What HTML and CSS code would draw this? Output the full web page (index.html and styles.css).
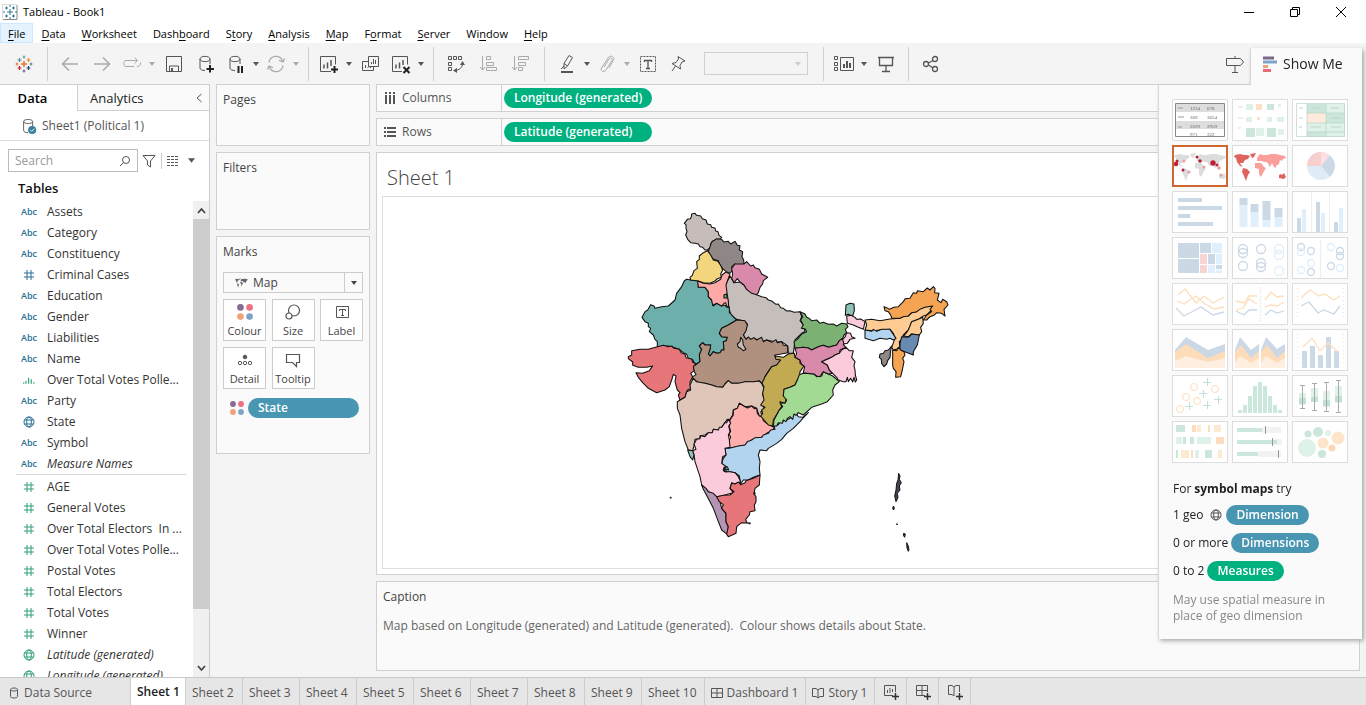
FILE: index.html
```html
<!DOCTYPE html>
<html lang="en">
<head>
<meta charset="utf-8">
<title>Tableau - Book1</title>
<link rel="stylesheet" href="styles.css">
</head>
<body>
<svg class="sprite" aria-hidden="true">
  <symbol id="caret" viewBox="0 0 6 4"><path d="M0 0h6L3 4z" fill="currentColor"/></symbol>
  <symbol id="cyl" viewBox="0 0 20 20"><path d="M4 5v10c0 1.500 2.500 2.500 5 2.500M14 5v5M4 5c0-3 10-3 10 0s-10 3-10 0z" fill="none" stroke="currentColor"/></symbol>
  <symbol id="hash" viewBox="0 0 12 12"><path d="M4 1v10M8 1v10M1 4h10M1 8h10" fill="none" stroke="currentColor"/></symbol>
  <symbol id="globe" viewBox="0 0 12 12"><g fill="none" stroke="currentColor"><circle cx="6" cy="6" r="5"/><ellipse cx="6" cy="6" rx="2.300" ry="5"/><path d="M1.500 4h9M1.500 8h9"/></g></symbol>
  <symbol id="bars" viewBox="0 0 16 12"><path d="M1 9v2M4 7v4M7.500 3v8M11 5v6M14.500 9v2" stroke="currentColor" stroke-width="1.500"/></symbol>
  <symbol id="dots" viewBox="0 0 14 14"><circle cx="3" cy="3" r="2.900" fill="#866a94"/><circle cx="11" cy="3" r="2.900" fill="#ee6f82"/><circle cx="3" cy="11" r="2.900" fill="#f0a177"/><circle cx="11" cy="11" r="2.900" fill="#7fa2ca"/></symbol>
  <symbol id="west" viewBox="0 0 54 40"><path d="M2 9l5-1 4 1 3 0 3 1-2 3-3 1-2 3-3 0 1 2 2 2-3-1-3-4-1-4-2-1zM17 8l6-1-2 4-2 1zM10 22l4 1 3 3-2 3-2 6-2-5-2-4z"/></symbol>
  <symbol id="east" viewBox="0 0 54 40"><path d="M24 15l0-3 3-4 3 1 4 0 4-1 5 0 4 1 5 1 1 2-3 1-1 2-2-1-1 4-3 2 0 2-2-1-2-4-2 4-3-5-3 0-2-1zM22 17l6 0 3 4 2 1-3 5-2 4-2-3 0-5-4-1z"/></symbol>
  <symbol id="oz" viewBox="0 0 54 40"><path d="M46 29l2-1 1 1 2-2 2 4-2 2-5-1z"/></symbol>
  <symbol id="logo" viewBox="0 0 18 18"><g fill="none" stroke-width="1.200"><path d="M9 6v6M6 9h6" stroke="#e8762c" stroke-width="1.600"/><path d="M4.500 3v4M2.500 5h4" stroke="#59879b"/><path d="M13.500 3v4M11.500 5h4" stroke="#eb9129"/><path d="M4.500 11v4M2.500 13h4" stroke="#c72035"/><path d="M13.500 11v4M11.500 13h4" stroke="#1f457e"/><path d="M9 .5v3M7.500 2h3" stroke="#7199a6"/><path d="M9 14.500v3M7.500 16h3" stroke="#5b6591"/><path d="M2 7.500v3M.5 9h3" stroke="#e8762c"/><path d="M16 7.500v3M14.500 9h3" stroke="#5b879b"/></g></symbol>
</svg>

<div class="app">
  <header class="titlebar">
    <svg class="app-icon" width="16" height="16" viewBox="0 0 16 16"><path d="M.5.5h14M.5.5v14" stroke="#ddd"/><path d="M15 1v14.500H1" fill="none" stroke="#888"/><path d="M8 5v6M5 8h6M4.500 2.500v3M3 4h3M11.500 2.500v3M10 4h3M4.500 10.500v3M3 12h3M11.500 10.500v3M10 12h3M8 1v2M8 13v2M1 8h2M13 8h2" stroke="#2c7596" fill="none"/></svg>
    <span class="title">Tableau - Book1</span>
    <div class="window-buttons">
      <button aria-label="Minimise"><svg width="12" height="12"><path d="M1 6.500h10" stroke="#000"/></svg></button>
      <button aria-label="Restore"><svg width="12" height="12" fill="none" stroke="#000"><path d="M1.500 3.500h7v7h-7zM3.500 3.500v-2h7v7h-2"/></svg></button>
      <button aria-label="Close"><svg width="12" height="12"><path d="M1 1l10 10M11 1L1 11" stroke="#000"/></svg></button>
    </div>
  </header>

  <nav class="menubar">
    <button class="active"><u>F</u>ile</button><button><u>D</u>ata</button><button><u>W</u>orksheet</button><button>Dash<u>b</u>oard</button><button>S<u>t</u>ory</button><button><u>A</u>nalysis</button><button><u>M</u>ap</button><button>F<u>o</u>rmat</button><button><u>S</u>erver</button><button>Wi<u>n</u>dow</button><button><u>H</u>elp</button>
  </nav>

  <div class="toolbar">
    <div class="group start"><button class="tool" aria-label="Start page"><svg width="18" height="18"><use href="#logo"/></svg></button></div>
    <div class="group">
      <button class="tool off" aria-label="Undo"><svg width="20" height="20"><path d="M18 10H3M9 3.500L2.500 10 9 16.500" stroke-width="1.600"/></svg></button>
      <button class="tool off" aria-label="Redo"><svg width="20" height="20"><path d="M2 10h15M11 3.500l6.500 6.500-6.500 6.500" stroke-width="1.600"/></svg></button>
      <button class="tool combo off" aria-label="Replay"><svg width="20" height="20"><path d="M12 12.500H4c-3 0-3-6 0-6h11M12.500 3.500l3 3-3 3M15 12.500c2 0 4-1 3.500-4"/></svg></button><button class="more off" aria-label="Replay options"><svg><use href="#caret"/></svg></button>
      <button class="tool" aria-label="Save"><svg width="20" height="20"><path d="M2.500 2.500h15v15h-15zM5.500 17v-5h9v5"/><path d="M8 14v3" stroke-width="2"/></svg></button>
      <button class="tool" aria-label="New data source"><svg width="20" height="20"><path d="M4 5v9c0 1.500 2 2.500 5 2.500M14 5v5M4 5c0-3.500 10-3.500 10 0s-10 3.500-10 0z"/><path d="M14 11v7.500M10.500 15h7.500" stroke="#222" stroke-width="2"/></svg></button>
      <button class="tool combo" aria-label="Pause auto updates"><svg width="20" height="20"><path d="M4 5v9c0 1.500 2 2.500 5 2.500M14 5v5M4 5c0-3.500 10-3.500 10 0s-10 3.500-10 0z"/><path d="M12.500 12v7M16 12v7" stroke="#222" stroke-width="2"/></svg></button><button class="more" aria-label="Update options"><svg><use href="#caret"/></svg></button>
      <button class="tool combo off" aria-label="Refresh"><svg width="20" height="20"><path d="M3 8.500A7 7 0 0 1 16.500 7M17 11.500A7 7 0 0 1 3.500 13M18.500 4.500L17 8l-4-1.500M1.500 15.500L3 12l4 1.500" stroke-width="1.300"/></svg></button><button class="more off" aria-label="Refresh options"><svg><use href="#caret"/></svg></button>
    </div>
    <div class="group">
      <button class="tool combo" aria-label="New worksheet"><svg width="20" height="20"><path d="M12 17.500H1.500v-15h15v8"/><path d="M5 14.500v-4M8.500 14.500v-6M12 12V6" stroke-width="1.500"/><path d="M15.500 12v7M12 15.500h7" stroke="#222" stroke-width="2"/></svg></button><button class="more" aria-label="New options"><svg><use href="#caret"/></svg></button>
      <button class="tool" aria-label="Duplicate"><svg width="20" height="20"><path d="M7.500 2.500h10v10h-10zM7 7.500H1.500v9h11v-4M4.500 14v-3M7 14v-1M9.500 14v-1M10.500 10V8M12.500 10V5M14.500 10V6"/></svg></button>
      <button class="tool combo" aria-label="Clear sheet"><svg width="20" height="20"><path d="M11 17.500H1.500v-15h15v8"/><path d="M5 14.500v-4M8.500 14.500v-6M12 11V6" stroke-width="1.500"/><path d="M12.500 13l6 6M18.500 13l-6 6" stroke="#222" stroke-width="2"/></svg></button><button class="more" aria-label="Clear options"><svg><use href="#caret"/></svg></button>
    </div>
    <div class="group">
      <button class="tool" aria-label="Swap rows and columns"><svg width="20" height="20"><path d="M2.500 2.500h3v3h-3zM7.500 2.500h3v3h-3zM12.500 2.500h3v3h-3zM2.500 8.500h3v3h-3zM2.500 13.500h3v3h-3zM16.500 9c0 5-3 7-8 7.500"/><path d="M16.500 7l2.500 4h-5zM7 16.500l4-2.500v5z" fill="currentColor" stroke="none"/></svg></button>
      <button class="tool off" aria-label="Sort ascending"><svg width="20" height="20"><path d="M4.500 2v14M2 13l2.500 3L7 13M8.500 2.500h4v3h-4zM8.500 8.500h7v3h-7zM8.500 13.500h10v3h-10z"/></svg></button>
      <button class="tool off" aria-label="Sort descending"><svg width="20" height="20"><path d="M4.500 2v14M2 13l2.500 3L7 13M8.500 2.500h10v3h-10zM8.500 8.500h7v3h-7zM8.500 13.500h4v3h-4z"/></svg></button>
    </div>
    <div class="group edit">
      <button class="tool combo" aria-label="Highlight"><svg width="20" height="20"><path d="M7 9.500L12 1.500l3.500 2-5 8.500-3.500 3V9.500l3.500 2.500M7 12l-3 3"/><path d="M4 18h12" stroke-width="2"/></svg></button><button class="more" aria-label="Highlight options"><svg><use href="#caret"/></svg></button>
      <button class="tool combo off" aria-label="Group members"><svg width="20" height="20"><path d="M7 13l5-8c1.500-2 4-.5 3 1.500l-6 9.500c-2 3-6 1-4.500-2L11 4c2-3.500 7-1.500 5.500 2L12 14"/></svg></button><button class="more off" aria-label="Group options"><svg><use href="#caret"/></svg></button>
      <button class="tool label-tool" aria-label="Show mark labels"><svg width="20" height="20"><path d="M2.500 2.500h15v15h-15z" stroke-dasharray="2 1"/><path d="M6.500 8V6.500h7V8M10 6.500v8M8 14.500h4" stroke-width="1.300"/></svg></button>
      <button class="tool" aria-label="Fix axes"><svg width="20" height="20"><path d="M9 2.500l7 4.500-3 1-2 3.500.5 3.500L3 9.500l4-1 2.500-3.500zM6.500 12L3 17"/></svg></button>
    </div>
    <div class="fit"><select aria-label="Fit" disabled><option></option></select><svg><use href="#caret"/></svg></div>
    <div class="group">
      <button class="tool combo" aria-label="Show cards"><svg width="20" height="20"><path d="M.5 2.500h3v3h-3zM.5 8.500h3v3h-3zM.5 13.500h3v3h-3zM6.500 3.500h13v13h-13z"/><path d="M10 14v-4M13 14V7M16 14V9" stroke-width="2"/></svg></button><button class="more" aria-label="Card options"><svg><use href="#caret"/></svg></button>
      <button class="tool" aria-label="Presentation mode"><svg width="20" height="20"><path d="M2 3.500h16M3.500 3.500v8h13v-8M10 12v5M6 17.500h8" stroke-width="1.300"/></svg></button>
    </div>
    <div class="group">
      <button class="tool" aria-label="Share"><svg width="20" height="20" stroke-width="1.300"><circle cx="5" cy="10" r="2.500"/><circle cx="14" cy="5" r="2.500"/><circle cx="14" cy="15" r="2.500"/><path d="M7.500 9L12 6.500M7.500 11L12 14"/></svg></button>
    </div>
    <button class="tool guide" aria-label="Guide"><svg width="20" height="20"><path d="M1.500 4.500h14l3 3.500-3 3.500h-14zM10 2v2M10 12v6M7 18.500h6"/></svg></button>
  </div>

  <main class="work">
    <aside class="data-pane">
      <div class="pane-tabs"><button class="tab on">Data</button><button class="tab">Analytics</button><button class="collapse" aria-label="Collapse"><svg width="8" height="10"><path d="M6.500 1L2 5l4.500 4" fill="none" stroke="#555"/></svg></button></div>
      <a class="source" href="#"><svg width="18" height="18" viewBox="0 0 20 20"><use href="#cyl"/><circle cx="13.500" cy="14.500" r="4.500" fill="#3a7f9c"/><path d="M11.500 14.500l1.500 1.500 3-3" stroke="#fff" fill="none"/></svg>Sheet1 (Political 1)</a>
      <div class="search-row">
        <label class="search"><input type="text" placeholder="Search" aria-label="Search"><svg width="12" height="12" fill="none" stroke="#555"><circle cx="7" cy="5" r="3.500"/><path d="M4.500 7.500L1 11"/></svg></label>
        <button aria-label="Filter"><svg width="14" height="14" fill="none" stroke="#555"><path d="M1 1.500h12L8.500 7v6l-3-2V7z"/></svg></button>
        <span class="vline"></span>
        <button class="view-as" aria-label="View as"><svg class="grid-icon" width="12" height="10"><path d="M0 .5h12M0 3.500h12M0 6.500h12M0 9.500h12" stroke="#555" stroke-dasharray="3 1" stroke-width="1"/></svg><svg class="big-caret"><use href="#caret"/></svg></button>
      </div>
      <h2>Tables</h2>
      <div class="list-wrap">
        <ul class="fields">
          <li><b>Abc</b><span>Assets</span></li>
          <li><b>Abc</b><span>Category</span></li>
          <li><b>Abc</b><span>Constituency</span></li>
          <li><svg><use href="#hash"/></svg><span>Criminal Cases</span></li>
          <li><b>Abc</b><span>Education</span></li>
          <li><b>Abc</b><span>Gender</span></li>
          <li><b>Abc</b><span>Liabilities</span></li>
          <li><b>Abc</b><span>Name</span></li>
          <li class="green"><svg><use href="#bars"/></svg><span>Over Total Votes Polle...</span></li>
          <li><b>Abc</b><span>Party</span></li>
          <li><svg><use href="#globe"/></svg><span>State</span></li>
          <li><b>Abc</b><span>Symbol</span></li>
          <li class="it"><b>Abc</b><span>Measure Names</span></li>
          <li class="green first"><svg><use href="#hash"/></svg><span>AGE</span></li>
          <li class="green"><svg><use href="#hash"/></svg><span>General Votes</span></li>
          <li class="green"><svg><use href="#hash"/></svg><span>Over Total Electors&nbsp; In ...</span></li>
          <li class="green"><svg><use href="#hash"/></svg><span>Over Total Votes Polle...</span></li>
          <li class="green"><svg><use href="#hash"/></svg><span>Postal Votes</span></li>
          <li class="green"><svg><use href="#hash"/></svg><span>Total Electors</span></li>
          <li class="green"><svg><use href="#hash"/></svg><span>Total Votes</span></li>
          <li class="green"><svg><use href="#hash"/></svg><span>Winner</span></li>
          <li class="green it"><svg><use href="#globe"/></svg><span>Latitude (generated)</span></li>
          <li class="green it"><svg><use href="#globe"/></svg><span>Longitude (generated)</span></li>
        </ul>
        <div class="scrollbar"><button aria-label="Scroll up"><svg width="9" height="7"><path d="M1 6l3.500-4L8 6" fill="none" stroke="#444" stroke-width="1.800"/></svg></button><span class="thumb-bar"></span><button class="down" aria-label="Scroll down"><svg width="9" height="7"><path d="M1 1l3.500 4L8 1" fill="none" stroke="#444" stroke-width="1.800"/></svg></button></div>
      </div>
    </aside>

    <section class="cards">
      <div class="card pages">Pages</div>
      <div class="card filters">Filters</div>
      <div class="card marks">
        <div>Marks</div>
        <div class="mark-type"><svg class="world" width="13" height="10" viewBox="0 6 54 30" preserveAspectRatio="none" fill="#666"><use href="#west" width="54" height="40"/><use href="#east" width="54" height="40"/></svg><select aria-label="Mark type"><option>Map</option></select><span class="drop"><svg><use href="#caret"/></svg></span></div>
        <div class="mark-grid">
          <button><svg width="16" height="16"><use href="#dots"/></svg>Colour</button>
          <button><svg width="16" height="16" fill="none" stroke="#555" stroke-width="1.200"><circle cx="9" cy="6.500" r="5.500"/><circle cx="4" cy="12" r="3" fill="#fafafa"/></svg>Size</button>
          <button><svg width="16" height="16" fill="none" stroke="#555"><path d="M2.500 2.500h12v11h-12zM5.500 7V5.500h6V7M8.500 5.500v6M7 11.500h3"/></svg>Label</button>
          <button><svg width="16" height="16" fill="none" stroke="#555"><circle cx="8" cy="5" r="1.800" fill="#555"/><circle cx="3" cy="11" r="1.700"/><circle cx="8" cy="11" r="1.700"/><circle cx="13" cy="11" r="1.700"/></svg>Detail</button>
          <button><svg width="16" height="16" fill="none" stroke="#555" stroke-width="1.200"><path d="M1.500 2.500h13v8h-3v4l-4-4h-6z"/></svg>Tooltip</button>
        </div>
        <div class="mark-pill"><svg width="14" height="14"><use href="#dots"/></svg><button class="pill blue">State</button></div>
      </div>
    </section>

    <section class="sheet">
      <div class="shelf"><div class="shelf-name"><svg width="12" height="12"><path d="M2 0v2M6 0v2M10 0v2M2 3v9M6 3v9M10 3v9" stroke="#555" stroke-width="2"/></svg>Columns</div><button class="pill green-bg">Longitude (generated)</button></div>
      <div class="shelf"><div class="shelf-name"><svg width="12" height="12"><path d="M0 2h2M0 6h2M0 10h2M3 2h9M3 6h9M3 10h9" stroke="#555" stroke-width="2"/></svg>Rows</div><button class="pill green-bg">Latitude (generated)</button></div>
      <div class="view">
        <h1>Sheet 1</h1>
        <div class="canvas">
          <svg class="india" viewBox="0 0 1020 1080" role="img" aria-label="Map of India by state">
            <g stroke="#111" stroke-width="3.200" stroke-linejoin="round">
              <path fill="#c6bebb" d="M330 228L342 248 360 246 372 255 380 268 410 284 425 290 438 293 445 300 455 303 468 313 475 312 482 323 490 325 500 333 510 332 522 337 540 335 545 350 540 362 550 375 555 395 545 400 525 420 522 445 520 460 505 460 503 438 485 425 468 426 440 420 425 425 410 418 380 420 370 405 378 390 382 372 370 362 350 358 335 350 330 335 326 320 325 305 318 285 316 255Z"/>
              <path fill="#c6bcba" d="M225 40L230 46 242 48 247 56 258 60 262 72 272 74 275 82 285 84 287 93 294 95 297 106 305 112 298 118 280 122 272 132 272 142 262 150 255 150 248 142 240 140 235 132 225 130 212 128 203 118 197 105 201 95 198 85 198 74 193 70 202 58 211 56 214 50 215 42Z"/>
              <path fill="#6dafaa" d="M200 238L212 240 235 243 235 262 255 262 265 275 265 290 275 300 280 318 290 310 305 318 315 315 320 322 328 322 328 337 335 345 350 360 325 375 305 385 298 400 305 410 322 412 319 422 310 425 312 450 305 450 300 458 290 460 280 455 270 468 265 462 270 448 272 435 255 435 248 428 238 438 245 448 238 465 240 485 230 492 222 488 219 480 205 475 200 463 190 458 178 448 155 440 145 438 112 440 112 425 105 418 100 405 88 395 92 385 85 380 85 370 75 365 66 352 75 335 83 330 92 314 102 318 105 325 125 320 145 318 165 300 170 280 185 260 193 242Z"/>
              <path fill="#8f8686" d="M290 116L305 118 312 126 325 124 332 132 345 124 352 136 360 137 358 150 368 155 366 170 371 180 372 192 362 198 345 192 335 200 338 212 328 220 318 214 308 206 300 196 295 182 280 178 270 165 265 155 270 140 275 126Z"/>
              <path fill="#f3d57d" d="M262 152L272 165 280 180 294 184 302 196 308 210 302 222 304 232 292 236 285 243 270 250 250 248 235 243 212 240 210 232 217 226 222 212 232 205 230 185 238 178 238 168 250 158Z"/>
              <path fill="#fea9a8" d="M318 216L330 222 325 235 318 255 322 285 325 305 326 320 320 318 317 308 312 310 305 318 290 310 278 316 275 300 265 290 265 275 255 262 235 262 233 243 250 250 270 252 285 248 302 238 306 225Z"/>
              <path fill="#68a75d" d="M312 284L320 282 322 294 312 294Z"/>
              <path fill="#d98aab" d="M345 192L372 192 380 185 392 198 400 195 405 203 418 208 425 222 443 232 430 242 428 252 420 262 415 278 410 284 395 280 380 268 372 255 360 246 352 236 342 248 335 235 338 222 335 205Z"/>
              <path fill="#b0907f" d="M230 492L240 485 238 465 245 448 238 438 248 428 255 435 272 435 270 448 265 462 270 468 280 455 290 460 300 458 305 450 312 450 310 425 319 422 322 412 305 410 298 400 305 385 325 375 350 360 375 362 382 375 378 392 370 405 378 418 385 411 392 418 402 413 410 420 425 412 430 425 440 420 455 427 468 419 472 428 485 425 490 436 503 438 503 458 480 463 464 465 468 475 482 480 470 495 455 500 445 515 435 530 430 548 425 550 418 543 400 545 375 545 365 553 355 550 335 550 325 542 315 552 308 562 290 560 275 555 255 550 235 548 215 532 228 524 222 513 218 500Z"/>
              <path fill="#c6bebb" d="M362 412L368 420 370 435 378 448 370 452 362 445 355 442 352 432 360 425Z"/>
            </g>
            <g transform="translate(0 420)" stroke="#111" stroke-width="3.200" stroke-linejoin="round">
              <path fill="#e67679" d="M112 20L130 16 145 20 155 18 162 25 178 28 183 38 195 43 198 53 215 57 218 66 228 72 220 80 222 92 212 100 218 110 210 125 212 148 205 148 200 155 195 172 180 180 175 165 180 158 172 150 165 125 168 108 160 103 155 120 148 140 135 150 110 158 85 145 68 128 55 112 48 98 68 100 88 92 98 78 80 82 55 82 38 76 38 66 25 56 25 50 35 45 35 32 60 28 85 28Z"/>
              <path fill="#e0c5b9" d="M172 185L195 172 200 155 212 150 210 135 220 115 229 125 255 130 275 135 290 140 308 142 315 132 325 122 335 130 355 130 375 125 400 125 418 123 425 130 432 145 428 165 435 180 430 200 440 212 422 215 428 232 418 228 410 205 395 198 375 200 358 190 352 205 340 210 338 225 328 240 322 238 315 248 305 262 295 270 280 268 277 278 265 278 255 285 240 287 240 296 225 298 222 318 218 332 205 330 195 305 185 265 180 225 172 205Z"/>
              <path fill="#feaead" d="M330 325L325 310 328 300 332 292 326 280 332 275 328 260 330 240 340 225 340 210 352 205 358 190 375 200 383 204 395 198 403 206 410 205 412 220 418 228 428 232 430 242 440 250 462 262 460 270 440 280 425 292 408 295 395 300 390 310 375 315 350 320Z"/>
              <path fill="#b3d4ee" d="M565 218L555 228 540 245 520 265 500 280 485 298 470 310 445 325 440 332 420 330 415 345 420 365 418 385 420 405 400 412 385 420 370 420 362 432 358 408 345 398 330 395 315 395 312 385 318 380 305 370 310 355 318 345 315 325 328 325 355 318 375 315 382 305 395 300 405 293 425 292 430 285 445 280 452 270 465 268 462 258 475 254 480 246 488 246 492 236 500 240 515 232 520 218 530 222 535 230 548 232Z"/>
              <path fill="#fbcadb" d="M325 238L332 250 326 258 330 275 325 285 328 300 330 322 315 325 318 345 308 350 305 370 318 380 310 388 315 395 330 395 345 398 355 410 362 425 345 432 335 428 330 445 340 458 325 462 305 468 290 470 265 455 245 435 240 410 225 365 222 345 218 332 228 328 222 312 230 298 240 296 242 287 255 290 265 278 277 278 280 268 295 270 298 262 305 262 315 248 320 248Z"/>
              <path fill="none" d="M312 382L322 380 326 390 316 386 320 396 310 392Z"/>
              <path fill="#8fc2b6" d="M203 330L218 332 222 345 218 360 210 350Z"/>
              <path fill="#b394b3" d="M245 435L258 445 265 455 280 460 290 470 300 485 305 505 318 520 318 545 325 560 322 583 305 570 295 545 280 505 262 470 250 448Z"/>
              <path fill="#e67679" d="M420 405L418 435 405 445 402 462 408 470 408 485 403 495 405 512 390 515 388 525 377 538 380 548 390 550 365 548 350 560 348 580 325 590 320 583 325 560 318 545 318 520 305 505 310 494 298 485 290 470 310 466 330 465 342 455 330 445 335 430 345 432 355 426 362 434 375 428 378 422 400 415Z"/>
              <path fill="#111" d="M151 472h2v2h-2zM388 549h2v2h-2zM402 458h3v4h-3z"/>
            </g>
            <g transform="translate(360 210)" stroke="#111" stroke-width="3.200" stroke-linejoin="round">
              <path fill="#7bb173" d="M180 125L195 132 200 142 207 145 215 152 230 150 240 160 250 157 265 163 280 162 290 168 305 160 320 162 324 170 316 178 320 188 312 195 308 205 298 212 290 225 265 232 250 226 235 230 215 240 205 234 190 232 165 235 162 215 172 208 185 192 200 185 196 177 184 175 190 165 182 150 188 140Z"/>
              <path fill="#c1aa52" d="M105 258L130 262 145 252 163 250 165 262 180 270 180 280 192 288 180 305 178 322 172 330 165 345 150 352 132 358 130 378 140 380 138 390 135 400 120 395 125 410 115 425 100 450 98 468 85 465 72 450 62 438 68 430 65 420 75 412 62 405 72 390 68 370 72 350 66 340 75 320 85 305 95 290 110 285 122 270 108 268Z"/>
              <path fill="#a2d993" d="M190 310L222 312 230 320 245 318 250 305 265 312 278 318 298 335 285 345 278 360 280 375 262 395 245 402 215 412 190 435 175 428 168 436 162 432 158 448 150 440 142 445 138 455 130 450 127 460 115 458 110 468 100 468 102 450 118 420 128 410 120 398 135 400 140 390 130 378 132 358 150 352 165 345 172 330 178 314Z"/>
              <path fill="#d98aab" d="M165 235L190 232 205 234 215 240 235 230 250 226 265 232 290 225 298 212 308 205 315 215 310 224 318 232 300 240 298 250 285 255 275 262 260 268 245 275 262 285 268 300 278 310 265 312 250 305 240 320 230 318 222 312 190 308 194 290 184 282 180 270 165 262 170 250Z"/>
              <path fill="#fbcadb" d="M318 232L328 242 340 242 335 262 345 275 342 287 345 300 346 315 350 330 346 336 342 322 338 336 332 325 325 335 322 322 318 335 310 335 295 330 290 322 278 310 268 300 262 285 245 275 262 268 275 262 285 255 298 250 305 240ZM320 188L332 190 335 200 345 205 330 208 322 220 312 222 308 208 316 200ZM320 138L335 136 345 142 350 148 362 147 375 155 370 178 355 172 340 165 322 160Z"/>
              <path fill="#8fc2b6" d="M318 105L330 100 342 102 343 122 338 138 325 133 316 136Z"/>
              <path fill="#fecb93" d="M375 150L395 148 420 152 450 147 480 145 490 138 505 138 515 128 530 125 540 115 555 110 578 108 575 120 560 135 550 138 535 148 515 155 510 170 505 180 490 195 484 210 478 215 480 235 460 240 455 232 465 205 460 190 450 178 420 180 400 182 375 180 380 165Z"/>
              <path fill="#f5a453" d="M432 110L440 113 448 118 462 112 475 110 490 95 496 86 510 85 520 68 530 70 532 62 550 65 562 54 570 60 580 50 585 55 584 68 597 70 592 90 603 98 608 88 620 95 624 105 612 118 615 138 605 130 590 128 582 136 570 140 560 150 550 150 560 135 575 125 570 118 578 108 555 112 540 118 530 125 515 128 505 138 490 140 480 145 455 145 452 135 445 125 435 122Z"/>
              <path fill="#b3d4ee" d="M375 180L395 184 400 178 410 184 425 178 450 178 458 190 468 205 460 210 450 205 440 208 420 205 400 212 375 205Z"/>
              <path fill="#fecb93" d="M490 198L498 190 505 180 515 155 535 148 548 142 550 160 542 172 545 185 538 195 515 192 505 200Z"/>
              <path fill="#6889b0" d="M485 200L505 202 515 192 538 195 532 225 520 245 520 255 480 240 480 220Z"/>
              <path fill="#f5a453" d="M458 240L470 242 475 232 482 240 492 245 495 255 488 265 492 275 487 300 482 320 467 322 468 305 460 295 458 285Z"/>
              <path fill="#8f8686" d="M455 228L452 242 450 262 443 272 440 282 432 290 425 280 424 268 418 262 420 252 430 250 435 242 445 240Z"/>
            </g>
            <path fill="#445" stroke="#111" stroke-width="3" d="M836 820L840 828 838 838 844 848 838 858 840 870 832 880 834 892 828 905 824 888 828 870 830 850 834 840ZM820 918l3 6-2 6-3-4zM830 971l3 2-2 2zM851 1000l5 2-2 10-4-6zM860 1028l4 8 3 12-2 6-4-10z"/>
          </svg>
        </div>
      </div>
      <div class="caption"><div class="cap-title">Caption</div><p>Map based on Longitude (generated) and Latitude (generated).&nbsp; Colour shows details about State.</p></div>
    </section>
  </main>

  <footer class="sheet-tabs">
    <button class="src"><svg width="12" height="12" viewBox="0 0 12 12" fill="none" stroke="#555"><path d="M2.500 2.500v7c0 2 7 2 7 0v-7c0-2-7-2-7 0s7 2 7 0"/></svg>Data Source</button>
    <button class="on">Sheet 1</button><button>Sheet 2</button><button>Sheet 3</button><button>Sheet 4</button><button>Sheet 5</button><button>Sheet 6</button><button>Sheet 7</button><button>Sheet 8</button><button>Sheet 9</button><button>Sheet 10</button>
    <button><svg width="12" height="12" fill="none" stroke="#555"><path d="M.5 1.500h11v9H.5zM6 1.500v9M.5 6h11"/></svg>Dashboard 1</button>
    <button><svg width="12" height="12" fill="none" stroke="#555"><path d="M6 3L4 1.500H.5v8H4L6 11l2-1.500h3.500v-8H8L6 3v8"/></svg>Story 1</button>
    <button class="new" aria-label="New worksheet"><svg width="16" height="16" fill="none" stroke="#555"><path d="M10 11.500H1.500v-10h11V8M4.500 9V6M7 9V4M9.500 8V5"/><path d="M12.500 9v7M9 12.500h7" stroke="#333" stroke-width="1.500"/></svg></button>
    <button class="new" aria-label="New dashboard"><svg width="16" height="16" fill="none" stroke="#555"><path d="M10 11.500H1.500v-10h11V8M7 1.500v10M1.500 6.500h11"/><path d="M12.500 9v7M9 12.500h7" stroke="#333" stroke-width="1.500"/></svg></button>
    <button class="new" aria-label="New story"><svg width="16" height="16" fill="none" stroke="#555"><path d="M7 12L5 10.500H1.500v-9H5L7 3l2-1.500h3.500V8M7 3v9"/><path d="M12.500 9v7M9 12.500h7" stroke="#333" stroke-width="1.500"/></svg></button>
  </footer>

  <aside class="show-me">
    <button class="show-tab"><svg width="14" height="16"><path d="M0 2h11" stroke="#7b6888" stroke-width="3"/><path d="M0 6h14" stroke="#7ea4cb" stroke-width="3"/><path d="M0 10.500h5" stroke="#f0a177" stroke-width="3"/><path d="M0 14.500h8" stroke="#e8687b" stroke-width="3"/></svg>Show Me</button>
    <div class="show-body">
      <div class="thumbs">
        <button aria-label="Text table"><svg viewBox="0 0 54 40"><path d="M2.500 3.500h49v33h-49z" fill="#fff" stroke="#888"/><path d="M3 4h48v8H3zM3 21h48v8H3z" fill="#ddd"/><path d="M5 8h5M5 17h6M5 27h4" stroke="#999"/><g class="tiny"><text x="17" y="10">1234</text><text x="34" y="10">678</text><text x="17" y="19">369</text><text x="34" y="19">3654</text><text x="17" y="28">2029</text><text x="34" y="28">2959</text><text x="17" y="36">971</text><text x="34" y="36">322</text></g></svg></button>
        <button aria-label="Heat map"><svg viewBox="0 0 54 40"><path d="M13 4h7v6h-7zM13 17h6v5h-6zM34 17h5v5h-5zM44 17h7v5h-7zM23 28h8v8h-8zM45 29h6v6h-6zM45 4h3v3h-3z" fill="#dff2e7"/><path d="M34 4h7v6h-7zM13 28h9v9h-9zM34 28h9v9h-9z" fill="#cbe6da"/><path d="M23 4h6v6h-6zM24 17h3v3h-3z" fill="#fddfc2"/><path d="M5 7h5M5 18h5M5 28h3" stroke="#ddd"/></svg></button>
        <button aria-label="Highlight table"><svg viewBox="0 0 54 40"><path d="M14 4h38v33H14z" fill="#dff2e7"/><path d="M14 4h19v9H14zM33 13h19v10H33zM14 32h19v5H14z" fill="#cbe6da"/><path d="M14 13h19v10H14z" fill="#feebdc"/><path d="M3.500 3.500h48v33h-48zM33 4v33M14 4v33M14 13h38M14 23h38M14 32h38" fill="none" stroke="#b9d3c7" stroke-opacity=".7"/><path d="M6 8h4M6 18h4M6 27h3M18 8h10M38 8h8M18 27h10M38 18h10M38 27h10" stroke="#c2d4cb"/></svg></button>
        <button class="selected" aria-label="Symbol map"><svg viewBox="0 0 54 40"><g fill="#dcdcdc"><use href="#west" width="54" height="40"/><use href="#east" width="54" height="40"/><use href="#oz" width="54" height="40"/></g><g fill="#bd1f38"><circle cx="3" cy="18" r="2.200"/><circle cx="4" cy="15" r="1.500"/><circle cx="10" cy="24" r="1.500"/><circle cx="24" cy="11" r="1.500"/><circle cx="27" cy="15" r="1.800"/><circle cx="40" cy="17" r="2.700"/><circle cx="44" cy="19" r="1.500"/></g><g fill="#ec9ba0"><circle cx="11" cy="15" r="1.500"/><circle cx="16" cy="26" r="1.500"/><circle cx="31" cy="21" r="1.500"/><circle cx="46" cy="22" r="1.800"/><circle cx="48" cy="29" r="1.500"/></g></svg></button>
        <button aria-label="Map"><svg viewBox="0 0 54 40"><g fill="#e0645e"><use href="#west" width="54" height="40"/><use href="#oz" width="54" height="40"/></g><g fill="#fb9f9d"><use href="#east" width="54" height="40"/></g></svg></button>
        <button aria-label="Pie chart"><svg viewBox="0 0 54 40"><circle cx="28" cy="20" r="14" fill="#dfecf8"/><path d="M28 20V6a14 14 0 0 0-14 14z" fill="#f7cfcf"/><path d="M28 20V6a14 14 0 0 1 9 3.500z" fill="#fde0e1"/><path d="M28 20l9-10.500a14 14 0 0 1 0 21z" fill="#cbd8e6"/></svg></button>
        <button aria-label="Horizontal bars"><svg viewBox="0 0 54 40"><path d="M5 8h24M5 16h44M5 24h12M5 32h35" stroke="#cbd8e6" stroke-width="4"/></svg></button>
        <button aria-label="Stacked bars"><svg viewBox="0 0 54 40"><path d="M10.500 12v23M21.500 19v16M33.500 28v7M45.500 25v10" stroke="#dfeffb" stroke-width="8"/><path d="M10.500 6v7M21.500 12v8M33.500 9v19M45.500 16v9" stroke="#cbd8e6" stroke-width="8"/></svg></button>
        <button aria-label="Side-by-side bars"><svg viewBox="0 0 54 40"><path d="M18.500 0v40M36.500 0v40" stroke="#eee"/><path d="M6 26v14M25 10v30M43 30v10" stroke="#cbd8e6" stroke-width="4"/><path d="M11 17v23M30 21v19M48 16v24" stroke="#dfeffb" stroke-width="4"/></svg></button>
        <button aria-label="Treemap"><svg viewBox="0 0 54 40"><path d="M5 5h21v15H5zM5 21h21v14H5zM27 5h11v10H27zM35 16h7v10h-7zM43 27h6v4h-6z" fill="#cbd8e6"/><path d="M39 5h10v10H39zM43 16h6v10h-6zM35 27h7v8h-7zM43 32h6v3h-6z" fill="#dfeffb"/><path d="M27 16h7v10h-7zM27 27h7v8h-7z" fill="#f9d4d4"/></svg></button>
        <button aria-label="Circle views"><svg viewBox="0 0 54 40" fill="none" stroke="#cbd8e6" stroke-width="1.300"><circle cx="10" cy="11" r="4.500"/><circle cx="10" cy="15" r="4.500"/><circle cx="10" cy="28" r="4.500"/><circle cx="28" cy="11" r="4.500"/><circle cx="28" cy="25" r="4.500"/><circle cx="28" cy="29" r="4.500"/><g stroke="#dfeffb"><circle cx="46" cy="11" r="4.500"/><circle cx="46" cy="17" r="4.500"/><circle cx="46" cy="33" r="4.500"/></g></svg></button>
        <button aria-label="Side-by-side circles"><svg viewBox="0 0 54 40" fill="none" stroke="#cbd8e6" stroke-width="1.300"><path d="M27.500 2v38" stroke="#eee"/><circle cx="8" cy="9" r="3.500"/><circle cx="18" cy="13" r="3.500"/><circle cx="18" cy="34" r="3.500"/><circle cx="47" cy="13" r="3.500"/><circle cx="47" cy="18" r="3.500"/><circle cx="38" cy="28" r="3.500"/><g stroke="#dfeffb"><circle cx="8" cy="14" r="3.500"/><circle cx="18" cy="25" r="3.500"/><circle cx="8" cy="32" r="3.500"/><circle cx="38" cy="9" r="3.500"/><circle cx="47" cy="30" r="3.500"/></g></svg></button>
        <button aria-label="Continuous lines"><svg viewBox="0 0 54 40" fill="none" stroke-width="1.300"><path d="M5 11l7-6 11 14 8-7 9 7 11-6M4 17l7 3 12-8 9 8 9 5 10-2" stroke="#fddfba"/><path d="M3 24l8 8 17-9 12 8 11-3" stroke="#cbd8e6"/></svg></button>
        <button aria-label="Discrete lines"><svg viewBox="0 0 54 40" fill="none" stroke-width="1.300"><path d="M27.500 3v36" stroke="#eee" stroke-dasharray="2 1"/><path d="M3 17l8 2 5-7h8M3 26l7-2 6-9 8 5M32 16l6-8 6 5 7-1M32 23l6-2 6 1 7-4" stroke="#fddfba"/><path d="M3 27l8 4 5-5h8M32 31l6-5 6 3 7-2" stroke="#cbd8e6"/></svg></button>
        <button aria-label="Dual lines"><svg viewBox="0 0 54 40" fill="none" stroke-width="1.300"><path d="M4.500 4v32M50.500 4v32" stroke="#e5e5e5" stroke-dasharray="1 3"/><path d="M8 14l9-8 9 6 6-2 9 6 6-4" stroke="#fddfba"/><path d="M8 22l8-4 9 11 6-3 10 4 6-8" stroke="#cbd8e6"/></svg></button>
        <button aria-label="Continuous area"><svg viewBox="0 0 54 40"><path d="M2 20L13 7l22 13 17-6v24H2z" fill="#cbd8e6"/><path d="M2 22l11-8 22 14 17-7v17H2z" fill="#fddcb9"/><path d="M2 31l11-5 22 6 17-4v10H2z" fill="#feefe0"/></svg></button>
        <button aria-label="Discrete area"><svg viewBox="0 0 54 40"><path d="M2 20L7 7l11 13 8-6v24H2zM28 20l5-13 11 12 8-5v24H28z" fill="#cbd8e6"/><path d="M2 22l6-7 10 13 8-7v17H2zM28 22l6-7 10 13 8-7v17H28z" fill="#fddcb9"/><path d="M2 33l5-7 11 7 8-5v10H2zM28 33l5-7 11 7 8-5v10H28z" fill="#feefe0"/></svg></button>
        <button aria-label="Dual combination"><svg viewBox="0 0 54 40" fill="none"><path d="M4.500 4v32M50.500 4v32" stroke="#e5e5e5" stroke-dasharray="1 3"/><path d="M11.500 21v17M19.500 16v22M27.500 25v13M35.500 7v31M43.500 21v17" stroke="#cbd8e6" stroke-width="5"/><path d="M10 17l9-9 8 13 8-8 10 9" stroke="#fddfba" stroke-width="1.300"/></svg></button>
        <button aria-label="Scatter plot"><svg viewBox="0 0 54 40" fill="none"><g stroke="#fddfba"><circle cx="7" cy="33" r="3.500"/><circle cx="13" cy="21" r="3.500"/><circle cx="21" cy="11" r="3.500"/><circle cx="24" cy="25" r="3.500"/><circle cx="42" cy="13" r="3.500"/></g><path d="M12 30.500h8M16.500 26v8M26 17.500h8M30.500 14v8M30 6.500h8M34.500 2v8M30 29.500h8M34.500 25v8M41 23.500h8M45.500 20v8" stroke="#c0e2d4"/></svg></button>
        <button aria-label="Histogram"><svg viewBox="0 0 54 40"><path d="M7 37v-3M12 37v-8M17 37V20M22 37V10M27 37V6M32 37V10M37 37V20M42 37v-8M47 37v-3" stroke="#cbe6da" stroke-width="4"/></svg></button>
        <button aria-label="Box plot"><svg viewBox="0 0 54 40"><path d="M9.500 17v12M21.500 12v14M33.500 15v16M45.500 10v17" stroke="#dff2e7" stroke-width="7"/><path d="M9.500 22v6M21.500 21v5M33.500 24v6M45.500 20v6" stroke="#c1e2d3" stroke-width="7"/><path d="M9.500 9v23M7 9.500h5M7 32.500h5M21.500 7v28M19 7.500h5M19 34.500h5M33.500 6v29M31 6.500h5M31 35.500h5M45.500 4v32M43 4.500h5M43 36.500h5" stroke="#aaa"/></svg></button>
        <button aria-label="Gantt chart"><svg viewBox="0 0 54 40"><path d="M3 3h9v7H3zM10 15h3v7h-3zM17 15h4v7h-4zM32 28h7v8h-7zM3 28h2v8H3z" fill="#cbe6da"/><path d="M3 15h6v7H3zM24 15h14v7H24zM22 28h4v8h-4z" fill="#dff2e7"/><path d="M19 3h4v7h-4zM35 3h2v7h-2zM43 15h8v7h-8zM18 28h2v8h-2z" fill="#fddcc0"/><path d="M24 3h4v7h-4zM41 3h7v7h-7zM8 28h8v8H8zM45 28h4v8h-4z" fill="#feead0"/></svg></button>
        <button aria-label="Bullet graph"><svg viewBox="0 0 54 40" fill="none"><path d="M29 8h19M40 20h9M25 32h23" stroke="#f2f2f2" stroke-width="6"/><path d="M4 8h25M4 20h40M4 32h21" stroke="#cbe6da" stroke-width="4"/><path d="M32.500 4v8M39.500 16v8M45.500 28v8" stroke="#999"/></svg></button>
        <button aria-label="Packed bubbles"><svg viewBox="0 0 54 40"><g fill="#cbe6da"><circle cx="15" cy="12" r="3.500"/><circle cx="25" cy="10" r="5"/><circle cx="29" cy="32" r="4"/></g><g fill="#dff2e7"><circle cx="14" cy="26" r="9"/><circle cx="35" cy="11" r="3"/></g><g fill="#fee4ca"><circle cx="45" cy="16" r="6.500"/><circle cx="30" cy="21" r="5.500"/></g><circle cx="39" cy="26" r="3.500" fill="#fdd7b5"/></svg></button>
      </div>
      <div class="hint">
        <div>For <strong>symbol maps</strong> try</div>
        <div>1 geo <svg class="geo"><use href="#globe"/></svg><span class="pill blue">Dimension</span></div>
        <div>0 or more<span class="pill blue">Dimensions</span></div>
        <div>0 to 2<span class="pill green-bg">Measures</span></div>
        <p>May use spatial measure in place of geo dimension</p>
      </div>
    </div>
  </aside>
</div>
</body>
</html>
```

FILE: styles.css
```css
* { box-sizing: border-box; }
body { margin: 0; font: 12px/16px "Open Sans", "Noto Sans", sans-serif; color: #333; }
button, input, select { font: inherit; color: inherit; background: none; border: 0; padding: 0; margin: 0; }
button { display: flex; align-items: center; justify-content: center; white-space: nowrap; }
svg { display: block; flex: none; }
.sprite { width: 0; height: 0; position: absolute; }
.app { position: relative; height: 100vh; display: flex; flex-direction: column; background: #f4f4f4; overflow: hidden; }

.titlebar { display: flex; align-items: center; height: 23px; padding-left: 2px; background: #fff; color: #000; font-size: 11px; flex: none; }
.title { margin-left: 5px; }
.window-buttons { margin-left: auto; display: flex; padding-right: 2px; }
.window-buttons button { width: 46px; height: 20px; }

.menubar { display: flex; height: 20px; background: #fff; color: #000; font-size: 11px; flex: none; }
.menubar button { padding: 2px 8px 0; }
.menubar u { text-underline-offset: 2px; }
.menubar .active { background: #e5f3ff; border: 1px solid #cce8ff; padding: 1px 7px 0; }

.toolbar { display: flex; align-items: center; height: 41px; flex: none; color: #555; }
.toolbar svg { fill: none; stroke: currentColor; }
.group { display: flex; align-items: center; height: 34px; padding: 0 6px; border-left: 1px solid #d0d0d0; }
.group.start { border: 0; padding: 0 7px 0 8px; }
.group.edit { padding: 0 6px 0 8px; margin-left: 2px; }
.tool { width: 32px; height: 28px; }
.tool.combo { width: 28px; }
.more { width: 12px; height: 28px; }
.more svg, .fit svg, .drop svg { width: 6px; height: 4px; stroke: none; }
.off { color: #aaa; }
.label-tool { width: 30px; }
.fit { display: flex; align-items: center; width: 104px; height: 23px; margin: 0 15px 0 3px; padding-right: 6px; border: 1px solid #d0d0d0; color: #ccc; }
.fit select { appearance: none; flex: 1; min-width: 0; }
.guide { margin-left: auto; margin-right: 115px; }

.work { flex: 1; min-height: 0; display: grid; grid-template-columns: 210px 154px minmax(0, 1fr); column-gap: 6px; padding-right: 6px; }
.data-pane { display: flex; flex-direction: column; min-height: 0; background: #fff; border-right: 1px solid #ccc; border-top: 1px solid #d0d0d0; }
.pane-tabs { display: flex; height: 26px; flex: none; font-size: 13px; color: #222; }
.tab { padding: 0 12px; background: #fafafa; border-bottom: 1px solid #d0d0d0; }
.tab.on { width: 78px; padding: 0 12px 0 0; background: #fff; border-bottom: 0; border-right: 1px solid #d0d0d0; font-weight: 600; color: #000; }
.collapse { flex: 1; justify-content: flex-end; padding-right: 6px; background: #fafafa; border-bottom: 1px solid #d0d0d0; }
.source { display: flex; align-items: center; gap: 4px; height: 30px; flex: none; padding-left: 20px; border-bottom: 1px solid #ddd; color: #555; text-decoration: none; }
.search-row { display: flex; align-items: center; gap: 4px; padding: 8px 8px 0; flex: none; color: #555; }
.search { display: flex; align-items: center; width: 130px; height: 23px; padding: 0 6px; border: 1px solid #bbb; }
.search input { flex: 1; min-width: 0; outline: 0; }
.search input::placeholder { color: #999; opacity: 1; }
.vline { width: 1px; height: 16px; background: #ccc; margin: 0 1px; }
.view-as { gap: 9px; }
.big-caret { width: 7px; height: 5px; }
h2 { margin: 7px 0 4px 18px; font-size: 13px; line-height: 18px; font-weight: 600; color: #111; }
.list-wrap { flex: 1; min-height: 0; display: flex; overflow: hidden; }
.fields { list-style: none; margin: 0; padding: 0; flex: 1; min-width: 0; color: #333; }
.fields li { display: grid; grid-template-columns: 26px 1fr; align-items: center; height: 21px; padding-left: 21px; }
.fields b { font: 600 9px/12px "Open Sans", sans-serif; color: #2a6f94; }
.fields svg { width: 12px; height: 12px; margin-left: 2px; color: #2a6f94; }
.fields .green svg { color: #2e9e78; }
.fields span { white-space: nowrap; }
.fields .it span { font-style: italic; }
.fields .first { height: 23px; border-top: 1px solid #d8d8d8; margin-left: 16px; margin-right: 7px; padding: 1px 0 0 5px; }
.scrollbar { width: 16px; display: flex; flex-direction: column; background: #f0f0f0; }
.scrollbar button { height: 18px; flex: none; }
.thumb-bar { height: 390px; flex: 0 1 auto; background: #cdcdcd; }
.scrollbar .down { margin-top: auto; }

.cards { display: flex; flex-direction: column; gap: 6px; }
.card { background: #fafafa; border: 1px solid #d0d0d0; padding: 7px 6px; color: #444; }
.pages { height: 62px; }
.filters { height: 78px; }
.marks { height: 218px; }
.mark-type { display: flex; align-items: center; height: 21px; margin-top: 12px; border: 1px solid #ccc; padding-left: 11px; }
.mark-type select { appearance: none; flex: 1; min-width: 0; padding-left: 5px; }
.drop { align-self: stretch; width: 18px; display: flex; align-items: center; justify-content: center; border-left: 1px solid #ccc; color: #444; }
.mark-grid { display: grid; grid-template-columns: repeat(3, 43px); justify-content: space-between; row-gap: 6px; margin-top: 6px; }
.mark-grid button { flex-direction: column; gap: 3px; height: 42px; border: 1px solid #ccc; background: #fff; font-size: 11px; padding-top: 3px; }
.mark-pill { display: flex; align-items: center; gap: 4px; margin: 9px 4px 0 7px; }
.mark-pill .pill { flex: 1; }
.pill { display: inline-flex; align-items: center; justify-content: flex-start; height: 20px; padding: 0 10px; border-radius: 10px; color: #fff; font-weight: 600; }
.blue { background: #4996b2; }
.green-bg { background: #00b180; }

.sheet { display: flex; flex-direction: column; gap: 6px; min-width: 0; padding-bottom: 6px; }
.shelf { display: flex; align-items: center; height: 28px; flex: none; background: #fafafa; border: 1px solid #d0d0d0; color: #555; }
.shelf-name { display: flex; align-items: center; gap: 6px; width: 125px; height: 26px; padding-left: 7px; border-right: 1px solid #d0d0d0; }
.shelf .pill { width: 148px; margin-left: 2px; }
.view { flex: 1; min-height: 0; display: flex; flex-direction: column; background: #fff; border: 1px solid #d0d0d0; padding: 0 5px 5px; }
h1 { margin: 11px 5px 5px; font-size: 20px; line-height: 27px; font-weight: 300; color: #444; }
.canvas { flex: 1; min-height: 0; border: 1px solid #ddd; padding: 3px 0 0 237px; }
.india { width: 340px; height: 360px; }
.caption { height: 90px; flex: none; background: #fafafa; border: 1px solid #d0d0d0; padding: 7px 6px; color: #666; }
.cap-title { color: #444; }
.caption p { margin: 13px 0 0; }

.sheet-tabs { display: flex; height: 28px; flex: none; background: #e6e6e6; border-top: 1px solid #c8c8c8; color: #555; }
.sheet-tabs button { justify-content: flex-start; gap: 4px; min-width: 57px; padding: 2px 7px 0 6px; border-right: 1px solid #ccc; }
.sheet-tabs .src { width: 131px; padding-left: 8px; }
.sheet-tabs .on { min-width: 55px; background: #fff; font-weight: 600; color: #222; padding: 0 5px 0 6px; }
.sheet-tabs .new { min-width: 32px; justify-content: center; padding: 0; }

.show-me { position: absolute; top: 48px; right: 4px; width: 204px; display: flex; flex-direction: column; align-items: flex-end; filter: drop-shadow(2px 2px 2px #aaa); }
.show-tab { width: 112px; height: 37px; justify-content: flex-start; gap: 6px; padding: 0 0 6px 12px; background: #fafafa; font-size: 14px; color: #222; border-left: 1px solid #d8d8d8; }
.show-body { width: 100%; background: #fafafa; padding: 14px 13px 15px; border-left: 1px solid #d8d8d8; }
.thumbs { display: grid; grid-template-columns: repeat(3, 56px); gap: 4px; }
.thumbs button { height: 42px; background: #fff; border: 1px solid #ddd; overflow: hidden; }
.thumbs svg { width: 54px; height: 40px; }
.thumbs .selected { border: 2px solid #cf6732; }
.tiny { font: 5px "Liberation Serif", serif; fill: #666; }
.hint { margin: 13px 0 0 1px; line-height: 28px; color: #222; }
.hint > div { display: flex; align-items: center; height: 28px; gap: 3px; }
.hint > div:first-child { height: 25px; }
.hint .pill { line-height: 20px; }
.geo { width: 12px; height: 12px; margin: 0 1px 0 4px; color: #555; }
.hint p { margin: 7px 0 0; line-height: 16px; color: #888; }
```
